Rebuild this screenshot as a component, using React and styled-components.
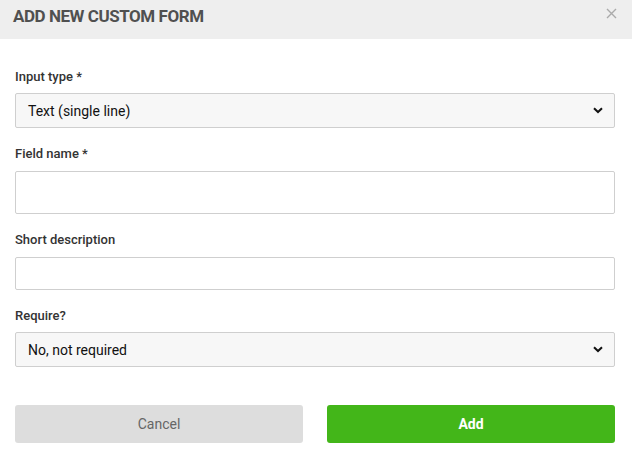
import React from "react";
import styled, { createGlobalStyle } from "styled-components";

const Global = createGlobalStyle`
  html, body { margin: 0; padding: 0; background: #fff; }
  body { font-family: Roboto, "Liberation Sans", sans-serif; }
  * { box-sizing: border-box; }
`;

const Dialog = styled.div`
  width: 632px;
  height: 455px;
  background: #fff;
  display: flex;
  flex-direction: column;
`;

const Header = styled.div`
  height: 39px;
  background: #eeeeee;
  display: flex;
  align-items: flex-start;
  justify-content: space-between;
  padding: 5px 15px 0 13px;
`;

const Title = styled.h1`
  margin: 0;
  font-size: 17px;
  line-height: 22px;
  font-weight: 700;
  color: #505050;
  letter-spacing: -0.45px;
`;

const Close = styled.button`
  border: 0;
  background: none;
  padding: 0;
  margin-top: 3px;
  width: 11px;
  height: 11px;
  display: flex;
  cursor: pointer;
`;

const Body = styled.div`
  padding: 30px 17px 0 15px;
  display: flex;
  flex-direction: column;
  gap: 18px;
`;

const Group = styled.div`
  display: flex;
  flex-direction: column;
  gap: ${(p) => p.$gap || 8}px;
`;

const Label = styled.label`
  font-size: 13px;
  line-height: 16px;
  font-weight: 500;
  color: #333;
`;

const Select = styled.div`
  height: 35px;
  border: 1px solid #cfcfcf;
  border-radius: 2px;
  background: #f7f7f7;
  display: flex;
  align-items: center;
  justify-content: space-between;
  padding: 0 11px 0 12px;
  font-size: 14px;
  color: #111;
`;

const Input = styled.input`
  height: ${(p) => p.$h}px;
  border: 1px solid #cfcfcf;
  border-radius: 2px;
  background: #fff;
  font-family: inherit;
  font-size: 14px;
  padding: 0 12px;
  outline: none;
`;

const Actions = styled.div`
  display: grid;
  grid-template-columns: 1fr 1fr;
  gap: 24px;
  padding: 38px 17px 0 15px;
`;

const Btn = styled.button`
  height: 38px;
  border: 0;
  border-radius: 3px;
  font-family: inherit;
  font-size: 14px;
  font-weight: ${(p) => (p.$primary ? 700 : 400)};
  background: ${(p) => (p.$primary ? "#43b619" : "#dddddd")};
  color: ${(p) => (p.$primary ? "#fff" : "#666")};
  cursor: pointer;
`;

const Chevron = () => (
  <svg width="10" height="7" viewBox="0 0 10 7">
    <path d="M1 1.2 L5 5 L9 1.2" fill="none" stroke="#111" strokeWidth="2" />
  </svg>
);

export default function App() {
  return (
    <Dialog>
      <Global />
      <Header>
        <Title>ADD NEW CUSTOM FORM</Title>
        <Close aria-label="Close">
          <svg width="11" height="11" viewBox="0 0 11 11">
            <path d="M1 1 L10 10 M10 1 L1 10" stroke="#aaa" strokeWidth="1.4" />
          </svg>
        </Close>
      </Header>
      <Body>
        <Group>
          <Label>Input type *</Label>
          <Select>
            <span>Text (single line)</span>
            <Chevron />
          </Select>
        </Group>
        <Group $gap={9}>
          <Label>Field name *</Label>
          <Input $h={43} />
        </Group>
        <Group $gap={9}>
          <Label>Short description</Label>
          <Input $h={33} />
        </Group>
        <Group>
          <Label>Require?</Label>
          <Select>
            <span>No, not required</span>
            <Chevron />
          </Select>
        </Group>
      </Body>
      <Actions>
        <Btn>Cancel</Btn>
        <Btn $primary>Add</Btn>
      </Actions>
    </Dialog>
  );
}
